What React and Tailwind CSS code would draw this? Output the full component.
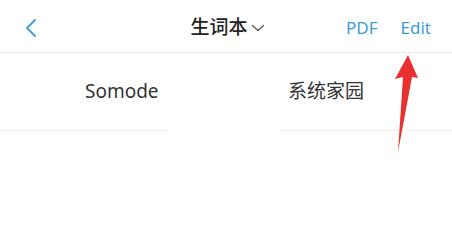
import React from 'react';

const font = { fontFamily: '"Noto Sans", "Noto Sans CJK SC", sans-serif' };

const App = () => {
  return (
    <div className="relative w-[452px] h-[237px] bg-white overflow-hidden" style={font}>
      {/* Header */}
      <div className="flex items-center h-[53px] pt-[3px] border-b border-[#ececec]">
        <div className="flex-1 flex items-center pl-[24px]">
          <svg width="14" height="20" viewBox="0 0 14 20" className="text-[#3d9bd6]">
            <polyline points="11,2 3,10 11,18" fill="none" stroke="currentColor" strokeWidth="1.8" strokeLinecap="round" strokeLinejoin="round" />
          </svg>
        </div>
        <div className="flex items-center gap-[3px]">
          <span className="text-[19px] font-medium text-[#222]">生词本</span>
          <svg width="14" height="10" viewBox="0 0 14 10" className="text-[#555]">
            <polyline points="1.5,2.5 7,7.5 12.5,2.5" fill="none" stroke="currentColor" strokeWidth="1.3" strokeLinecap="round" strokeLinejoin="round" />
          </svg>
        </div>
        <div className="flex-1 flex items-center justify-end gap-[23px] pr-[21px] text-[17px] text-[#3d9bd6]">
          <span>PDF</span>
          <span>Edit</span>
        </div>
      </div>

      {/* Word row */}
      <div className="flex h-[78px] text-[19px] text-[#333]">
        <div className="w-[168px] flex items-center pl-[85px] border-b border-[#f0f0f0]">Somode</div>
        <div className="w-[112px]" />
        <div className="flex-1 flex items-center pl-[8px] border-b border-[#f0f0f0]">系统家园</div>
      </div>

      {/* Annotation arrow */}
      <svg className="absolute left-0 top-0" width="452" height="237" viewBox="0 0 452 237">
        <polygon points="408,55 418,78 412,77 398,152 403,77 395,79" fill="#e8302e" />
      </svg>
    </div>
  );
};

export default App;
